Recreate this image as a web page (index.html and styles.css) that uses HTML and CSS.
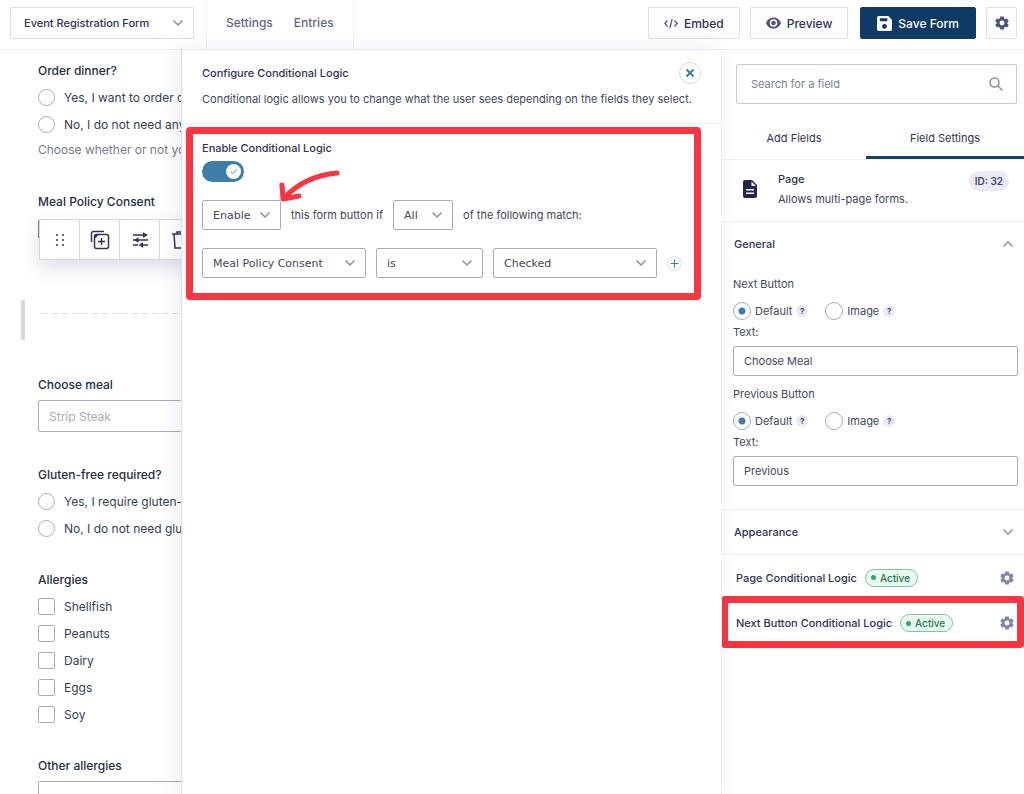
FILE: index.html
```html
<!DOCTYPE html>
<html lang="en">
<head>
<meta charset="utf-8">
<title>Event Registration Form</title>
<link rel="stylesheet" href="styles.css">
</head>
<body>
<svg class="sprite" aria-hidden="true">
  <symbol id="gear" viewBox="0 0 24 24"><path fill-rule="evenodd" d="M9 1h6l.8 3.200 1.600 1 3.400-.9 2.700 4.700-2.300 2.200v1.600l2.300 2.200-2.700 4.700-3.400-.9-1.600 1-.8 3.200H9l-.8-3.200-1.600-1-3.400.9L.5 15l2.300-2.200v-1.600L.5 9l2.700-4.700 3.400.9 1.600-1zM12 7.800a4.200 4.200 0 1 0 0 8.400 4.200 4.200 0 0 0 0-8.400z"/></symbol>
</svg>
<div class="app">
  <header class="topbar">
    <select class="form-switch" aria-label="Form"><option>Event Registration Form</option></select>
    <nav class="topnav"><a href="#settings">Settings</a><a href="#entries">Entries</a></nav>
    <div class="actions">
      <button class="btn" type="button"><svg class="i-code" viewBox="0 0 16 12"><path d="M4 2.500 1 6l3 3.500M12 2.500 15 6l-3 3.500M9.300 1 6.700 11"/></svg>Embed</button>
      <button class="btn" type="button"><svg class="i-eye" viewBox="0 0 16 12"><path fill-rule="evenodd" d="M8 0C4.300 0 1.300 2.300 0 6c1.300 3.700 4.300 6 8 6s6.700-2.300 8-6C14.700 2.300 11.700 0 8 0zm0 2a4 4 0 1 1 0 8 4 4 0 0 1 0-8z"/><circle cx="8" cy="6" r="2.400"/></svg>Preview</button>
      <button class="btn primary" type="button"><svg class="i-save" viewBox="0 0 16 16"><path fill-rule="evenodd" d="M2 0h10l4 4v10a2 2 0 0 1-2 2H2a2 2 0 0 1-2-2V2a2 2 0 0 1 2-2zm1 2.500v3.200h8V2.500zM8 8.500a2.600 2.600 0 1 0 0 5.200 2.600 2.600 0 0 0 0-5.200z"/></svg>Save Form</button>
      <button class="btn square" type="button" aria-label="Options"><svg class="i-gear"><use href="#gear"/></svg></button>
    </div>
  </header>

  <div class="workspace">
    <main class="canvas">
      <fieldset class="field">
        <legend>Order dinner?</legend>
        <label class="option"><input type="radio" name="dinner">Yes, I want to order dinner</label>
        <label class="option"><input type="radio" name="dinner">No, I do not need any dinner</label>
        <p class="hint">Choose whether or not you want dinner</p>
      </fieldset>
      <section class="field consent">
        <h2>Meal Policy Consent</h2>
        <div class="toolbar">
          <button type="button" aria-label="Move"><svg viewBox="0 0 20 20"><g class="solid"><circle cx="7" cy="5" r="1"/><circle cx="13" cy="5" r="1"/><circle cx="7" cy="10" r="1"/><circle cx="13" cy="10" r="1"/><circle cx="7" cy="15" r="1"/><circle cx="13" cy="15" r="1"/></g></svg></button>
          <button type="button" aria-label="Duplicate"><svg viewBox="0 0 20 20"><rect x="4.500" y="4.500" width="14" height="14" rx="2"/><path d="M11.500 8v7M8 11.500h7M1.500 12V3.500a2 2 0 0 1 2-2H14"/><path class="solid" d="M4.500 9V4.500H9z"/></svg></button>
          <button type="button" aria-label="Field settings"><svg viewBox="0 0 20 20"><path d="M3 5h11M3 10h3M8 10h10M3 15h5M11 15h7"/><path class="solid" d="M13 2.200 18 5l-5 2.800zM8.500 7.200v5.600L4 10zM13 12.200v5.600L8.500 15z"/></svg></button>
          <button type="button" aria-label="Delete"><svg viewBox="0 0 20 20"><path d="M2 4h16M7 4V2h6v2M4 4l1 14h10l1-14"/></svg></button>
        </div>
      </section>
      <div class="page-break"></div>
      <section class="field">
        <label class="name" for="meal">Choose meal</label>
        <select class="input muted" id="meal"><option>Strip Steak</option></select>
      </section>
      <fieldset class="field">
        <legend>Gluten-free required?</legend>
        <label class="option"><input type="radio" name="gluten">Yes, I require gluten-free food</label>
        <label class="option"><input type="radio" name="gluten">No, I do not need gluten-free food</label>
      </fieldset>
      <fieldset class="field">
        <legend>Allergies</legend>
        <label class="option"><input type="checkbox">Shellfish</label>
        <label class="option"><input type="checkbox">Peanuts</label>
        <label class="option"><input type="checkbox">Dairy</label>
        <label class="option"><input type="checkbox">Eggs</label>
        <label class="option"><input type="checkbox">Soy</label>
      </fieldset>
      <section class="field">
        <label class="name" for="other">Other allergies</label>
        <input class="input" id="other" type="text">
      </section>
    </main>

    <section class="flyout">
      <header class="flyout-head">
        <div class="flyout-title"><h1>Configure Conditional Logic</h1>
          <button class="close" type="button" aria-label="Close"><svg viewBox="0 0 10 10"><path d="M1.500 1.500l7 7M8.500 1.500l-7 7"/></svg></button></div>
        <p>Conditional logic allows you to change what the user sees depending on the fields they select.</p>
      </header>
      <div class="highlight logic">
        <label for="enable">Enable Conditional Logic</label>
        <span class="toggle"><input id="enable" type="checkbox" checked><svg viewBox="0 0 15 15"><circle cx="7.500" cy="7.500" r="7.500"/><path d="M4.800 7.700l2 1.900 3.700-3.900"/></svg></span>
        <div class="rule">
          <select class="w-s" aria-label="Action"><option>Enable</option></select>
          <span>this form button if</span>
          <select class="w-xs" aria-label="Match"><option>All</option></select>
          <span>of the following match:</span>
        </div>
        <div class="rule">
          <select class="w-l" aria-label="Field"><option>Meal Policy Consent</option></select>
          <select class="w-m" aria-label="Operator"><option>is</option></select>
          <select class="w-l" aria-label="Value"><option>Checked</option></select>
          <button class="add" type="button" aria-label="Add rule"><svg viewBox="0 0 9 9"><path d="M4.500 .5v8M.5 4.500h8"/></svg></button>
        </div>
        <svg class="arrow" viewBox="0 0 64 36" aria-hidden="true"><path d="M59 5C38 7 20 15 6 30M4 17l1 14 16-3"/></svg>
      </div>
    </section>

    <aside class="sidebar">
      <div class="search">
        <input type="search" placeholder="Search for a field" aria-label="Search for a field">
        <svg viewBox="0 0 14 14"><circle cx="5.500" cy="5.500" r="4.500"/><path d="M9 9l4.500 4.500"/></svg>
      </div>
      <div class="tabs"><button type="button">Add Fields</button><button class="active" type="button">Field Settings</button></div>
      <div class="about">
        <svg viewBox="0 0 14 18"><path fill-rule="evenodd" d="M2 0h7l5 5v11a2 2 0 0 1-2 2H2a2 2 0 0 1-2-2V2a2 2 0 0 1 2-2zm6.500 1.500V6H13zM3 9v1.500h8V9zm0 3.500V14h8v-1.500z"/></svg>
        <div><h2>Page</h2><p>Allows multi-page forms.</p></div>
        <span class="id">ID: 32</span>
      </div>
      <section class="general">
        <button class="fold" type="button">General<svg viewBox="0 0 12 8"><path d="M1.500 6.500 6 2l4.500 4.500"/></svg></button>
        <fieldset>
          <legend>Next Button</legend>
          <div class="choices">
            <label><input type="radio" name="next" checked>Default</label><button class="tip" type="button">?</button>
            <label><input type="radio" name="next">Image</label><button class="tip" type="button">?</button>
          </div>
          <label class="cap" for="next-text">Text:</label>
          <input class="input" id="next-text" type="text" value="Choose Meal">
        </fieldset>
        <fieldset>
          <legend>Previous Button</legend>
          <div class="choices">
            <label><input type="radio" name="prev" checked>Default</label><button class="tip" type="button">?</button>
            <label><input type="radio" name="prev">Image</label><button class="tip" type="button">?</button>
          </div>
          <label class="cap" for="prev-text">Text:</label>
          <input class="input" id="prev-text" type="text" value="Previous">
        </fieldset>
      </section>
      <button class="fold appearance" type="button">Appearance<svg viewBox="0 0 12 8"><path d="M1.500 1.500 6 6l4.500-4.500"/></svg></button>
      <div class="status">Page Conditional Logic<span class="pill">Active</span><button type="button" aria-label="Edit page logic"><svg><use href="#gear"/></svg></button></div>
      <div class="status highlight">Next Button Conditional Logic<span class="pill">Active</span><button type="button" aria-label="Edit next button logic"><svg><use href="#gear"/></svg></button></div>
    </aside>
  </div>
</div>
</body>
</html>
```
FILE: styles.css
```css
:root {
  --ink: #2f3352;
  --text: #42475c;
  --line: #efeff4;
  --edge: #a9abb8;
  --blue: #3e7da6;
  --navy: #103a66;
  --red: #f83541;
  --chevron: url("data:image/svg+xml,%3Csvg xmlns='http://www.w3.org/2000/svg' viewBox='0 0 12 8' fill='none' stroke='%238c90a4' stroke-width='1.5'%3E%3Cpath d='M1.500 1.500 6 6l4.500-4.500'/%3E%3C/svg%3E");
}
* { box-sizing: border-box; }
body, h1, h2, p, fieldset { margin: 0; padding: 0; }
body, button, input, select { font-family: Inter, "Liberation Sans", sans-serif; font-size: 11px; color: var(--text); }
body { line-height: 20px; background: #fff; }
h1, h2 { font-size: 11px; font-weight: 500; color: var(--ink); }
fieldset { border: 0; min-width: 0; }
legend { padding: 0; }
button { padding: 0; border: 0; background: none; cursor: pointer; }
input, select { margin: 0; }
a { color: inherit; text-decoration: none; }
.sprite { display: none; }

select {
  appearance: none;
  border: 1px solid var(--edge);
  border-radius: 2px;
  background: #fff var(--chevron) right 9px center / 12px 8px no-repeat;
}
.input { display: block; width: 100%; border: 1px solid var(--edge); border-radius: 2px; background-color: #fff; padding: 0 10px; }
input[type="radio"] { appearance: none; flex: none; width: 18px; height: 18px; border: 1px solid var(--edge); border-radius: 50%; background: #fff; }
input[type="radio"]:checked { background: radial-gradient(circle, var(--blue) 3px, #fff 4px); }

.app { display: flex; flex-direction: column; height: 100vh; overflow: hidden; }
.topbar { display: flex; align-items: center; flex: none; height: 50px; padding: 0 7px 0 10px; border-bottom: 1px solid var(--line); }
.form-switch { width: 184px; height: 32px; margin-bottom: 3px; padding: 0 13px; border-color: #dddfe9; font-weight: 500; color: var(--ink); }
.topnav { display: flex; gap: 21px; align-self: stretch; align-items: center; margin-left: 12px; padding: 0 19px 4px; border: solid var(--line); border-width: 0 1px; font-size: 12px; font-weight: 500; color: #63668a; }
.actions { display: flex; gap: 10px; margin: 0 0 3px auto; }
.btn { display: flex; align-items: center; justify-content: center; gap: 6px; height: 32px; padding: 0 15px; border: 1px solid #dddfe9; border-radius: 2px; background: #fdfdff; font-size: 12px; font-weight: 500; color: var(--ink); }
.btn svg { fill: #50547a; }
.btn.primary { margin-left: 2px; padding: 0 16px; border-color: var(--navy); background: var(--navy); color: #fff; }
.btn.primary svg { fill: #fff; }
.btn.square { width: 31px; padding: 0; }
.i-code { width: 14px; height: 11px; }
.btn .i-code { fill: none; stroke: #50547a; stroke-width: 1.500; }
.i-eye { width: 15px; height: 12px; }
.i-save { width: 15px; height: 15px; }
.i-gear { width: 14px; height: 14px; }

.workspace { display: flex; flex: 1; min-height: 0; }
.canvas { flex: 1; min-width: 0; overflow: hidden; padding: 11px 0 0 38px; white-space: nowrap; }
.field { margin-bottom: 28px; }
.field legend, .field .name, .field h2 { display: block; font-size: 12px; font-weight: 500; color: #252e44; }
.field legend { margin-bottom: 3px; }
.field .name { margin-bottom: 5px; }
.option { display: flex; align-items: center; gap: 9px; height: 27px; font-size: 12px; color: #343e50; }
.option input[type="checkbox"] { appearance: none; flex: none; width: 17px; height: 17px; border: 1px solid var(--edge); border-radius: 2px; }
.option input[type="radio"] { width: 17px; height: 17px; }
.hint { margin: 2px 0 0; padding-bottom: 4px; font-size: 12px; color: #767b88; }
.canvas .input { width: 400px; height: 32px; margin-bottom: 33px; font-size: 12px; }
.canvas .muted { color: #a9acb4; }
.consent { margin-bottom: 0; }
.toolbar { display: flex; position: relative; width: max-content; height: 41px; margin: 7px 0 0 1px; border: 1px solid #d5d7e4; background: #fff; box-shadow: 0 8px 18px rgba(50, 50, 110, .16); }
.toolbar::before { content: ""; position: absolute; top: 0; left: -2px; width: 1px; height: 18px; background: #807c9c; }
.toolbar button { display: grid; place-items: center; width: 40px; border-right: 1px solid #d5d7e4; }
.toolbar svg { width: 20px; height: 20px; fill: none; stroke: var(--ink); stroke-width: 1.500; }
.toolbar .solid { fill: var(--ink); stroke: none; }
.page-break { width: 400px; height: 40px; margin: 40px 0 35px -17px; border-left: 4px solid #d6d8df; border-radius: 2px; background: repeating-linear-gradient(90deg, #dcdde4 0 6px, transparent 6px 10px) 17px 13px / 100% 1px no-repeat; }

.flyout { flex: none; width: 541px; border-left: 1px solid #dcdeea; border-right: 1px solid var(--line); background: #fff; box-shadow: -4px 0 20px rgba(70, 80, 160, .1); z-index: 1; }
.flyout-head { height: 74px; padding: 12px 20px 0; border-bottom: 1px solid var(--line); }
.flyout-title { display: flex; align-items: center; justify-content: space-between; height: 22px; margin-bottom: 5px; }
.close, .add { display: grid; place-items: center; border: 1px solid #cfdfe9; border-radius: 50%; }
.close { width: 22px; height: 22px; }
.close svg { width: 10px; height: 10px; stroke: var(--blue); stroke-width: 2; }
.highlight { border: 7px solid var(--red); border-radius: 4px; }
.logic { position: relative; margin: 3px 20px 0 4px; padding: 4px 9px 15px; }
.logic > label { display: block; font-weight: 500; color: var(--ink); }
.toggle { display: block; position: relative; width: 42px; height: 21px; margin: 3px 0 18px; }
.toggle input { display: block; appearance: none; width: 42px; height: 21px; border-radius: 11px; background: var(--blue); }
.toggle svg { position: absolute; top: 3px; right: 3px; width: 15px; height: 15px; fill: #fff; pointer-events: none; }
.toggle path { fill: none; stroke: var(--blue); stroke-width: 1; }
.rule { display: flex; align-items: center; gap: 10px; }
.rule + .rule { margin-top: 18px; }
.rule select { height: 30px; padding: 0 10px; font-family: "DejaVu Sans", sans-serif; }
.w-xs { width: 60px; }
.w-s { width: 79px; }
.w-m { width: 107px; }
.w-l { width: 164px; }
.add { width: 15px; height: 15px; }
.add svg { width: 9px; height: 9px; stroke: var(--blue); stroke-width: 1; }
.arrow { position: absolute; top: 34px; left: 85px; width: 64px; height: 36px; fill: none; stroke: var(--red); stroke-width: 5; stroke-linecap: round; stroke-linejoin: round; }

.sidebar { flex: none; width: 302px; background: #fff; }
.search { position: relative; margin: 14px 7px 15px 14px; }
.search input { display: block; width: 100%; height: 40px; padding: 0 14px; border: 1px solid #c9cbd9; border-radius: 2px; appearance: none; }
.search input::placeholder { color: #7c8092; opacity: 1; }
.search svg { position: absolute; top: 13px; right: 14px; width: 14px; height: 14px; fill: none; stroke: #8c90a4; stroke-width: 1.500; }
.tabs { display: grid; grid-template-columns: 144fr 158fr; height: 41px; border-bottom: 1px solid var(--line); }
.tabs button { padding-top: 1px; border-bottom: 3px solid transparent; color: var(--ink); }
.tabs .active { border-color: #164468; }
.about { display: flex; height: 62px; padding: 9px 15px 0 21px; border-bottom: 1px solid var(--line); }
.about > svg { width: 14px; height: 18px; margin: 11px 21px 0 0; fill: #242748; }
.id { align-self: flex-start; margin: 2px 0 0 auto; padding: 0 6px; border-radius: 10px; background: #e9e9f7; font-size: 10px; font-weight: 600; color: #444770; }
.fold { display: flex; align-items: center; justify-content: space-between; width: 100%; height: 44px; padding: 0 10px 0 12px; font-weight: 500; color: var(--ink); }
.fold svg { width: 12px; height: 8px; fill: none; stroke: #8c90a4; stroke-width: 1.500; }
.general { padding-bottom: 23px; border-bottom: 1px solid var(--line); }
.general .fold { margin-bottom: 8px; }
.general fieldset { padding: 0 6px 0 11px; }
.general fieldset + fieldset { margin-top: 8px; }
.general .input { height: 30px; margin-top: 4px; }
.choices { display: flex; align-items: center; height: 18px; margin: 8px 0 2px; }
.choices label { display: flex; align-items: center; gap: 4px; }
.choices .tip + label { margin-left: 17px; }
.tip { width: 12px; height: 12px; margin-left: 4px; border-radius: 50%; background: #e9e9f7; font-size: 8px; font-weight: 700; line-height: 12px; color: #444770; }
.cap { display: block; }
.appearance { height: 45px; border-bottom: 1px solid var(--line); }
.status { display: flex; align-items: center; height: 45px; padding: 0 10px 0 14px; font-weight: 500; color: var(--ink); }
.status.highlight { height: 52px; margin: -4px 0 0 -1px; padding: 2px 3px 0 8px; }
.status button { display: flex; margin-left: auto; }
.status button svg { width: 14px; height: 14px; fill: #8488a8; }
.pill { display: flex; align-items: center; gap: 4px; height: 18px; margin-left: 8px; padding: 0 7px 0 5px; border: 1px solid #7fc4a0; border-radius: 9px; background: #e9fbf1; font-size: 10px; color: #22784f; }
.pill::before { content: ""; width: 5px; height: 5px; border-radius: 50%; background: #2fa56f; }
```
